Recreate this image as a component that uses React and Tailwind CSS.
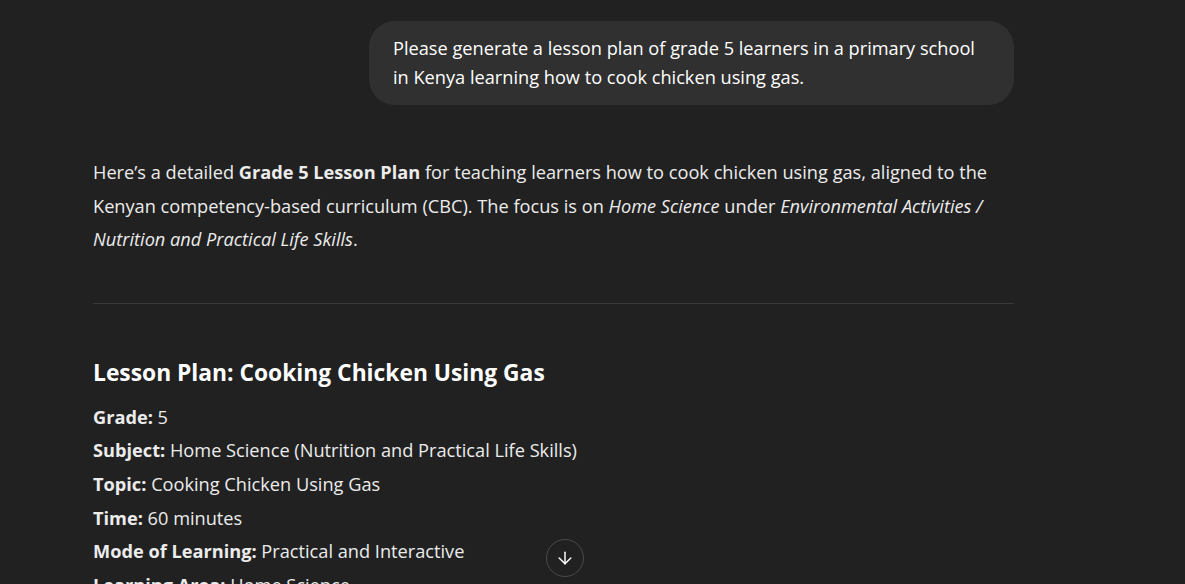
import { ArrowDown } from 'lucide-react';

const facts = [
  ['Grade:', '5'],
  ['Subject:', 'Home Science (Nutrition and Practical Life Skills)'],
  ['Topic:', 'Cooking Chicken Using Gas'],
  ['Time:', '60 minutes'],
  ['Mode of Learning:', 'Practical and Interactive'],
  ['Learning Area:', 'Home Science'],
];

export default function App() {
  return (
    <div
      className="relative h-[584px] w-full overflow-hidden bg-[#212121] text-[#ececec]"
      style={{ fontFamily: '"Open Sans", "Noto Sans", sans-serif' }}
    >
      <div className="ml-[93px] w-[921px] pt-[21px]">
        {/* user message */}
        <div className="flex justify-end">
          <div className="w-[645px] rounded-[26px] bg-[#303030] px-6 py-[13px] text-[18.2px] leading-[29px] text-white">
            Please generate a lesson plan of grade 5 learners in a primary school
            <br />
            in Kenya learning how to cook chicken using gas.
          </div>
        </div>

        {/* assistant reply */}
        <div className="mt-[51px] text-[18.2px] leading-[33.6px]">
          <p>
            Here’s a detailed <strong className="font-bold">Grade 5 Lesson Plan</strong> for teaching learners how to cook chicken using gas, aligned to the
            <br />
            Kenyan competency-based curriculum (CBC). The focus is on <em>Home Science</em> under <em>Environmental Activities /</em>
            <br />
            <em>Nutrition and Practical Life Skills</em>.
          </p>

          <hr className="mb-[51px] mt-[46px] border-t border-[#3a3a3a]" />

          <h3 className="mb-[10px] text-[22.8px] font-bold leading-[36px] text-white">
            Lesson Plan: Cooking Chicken Using Gas
          </h3>

          <div>
            {facts.map(([k, v]) => (
              <p key={k}>
                <strong className="font-bold">{k}</strong> {v}
              </p>
            ))}
          </div>
        </div>
      </div>

      <button className="absolute left-[546px] top-[539px] flex h-[38px] w-[38px] items-center justify-center rounded-full border border-[#4a4a4a] bg-[#212121] text-white">
        <ArrowDown size={20} strokeWidth={1.75} />
      </button>
    </div>
  );
}
